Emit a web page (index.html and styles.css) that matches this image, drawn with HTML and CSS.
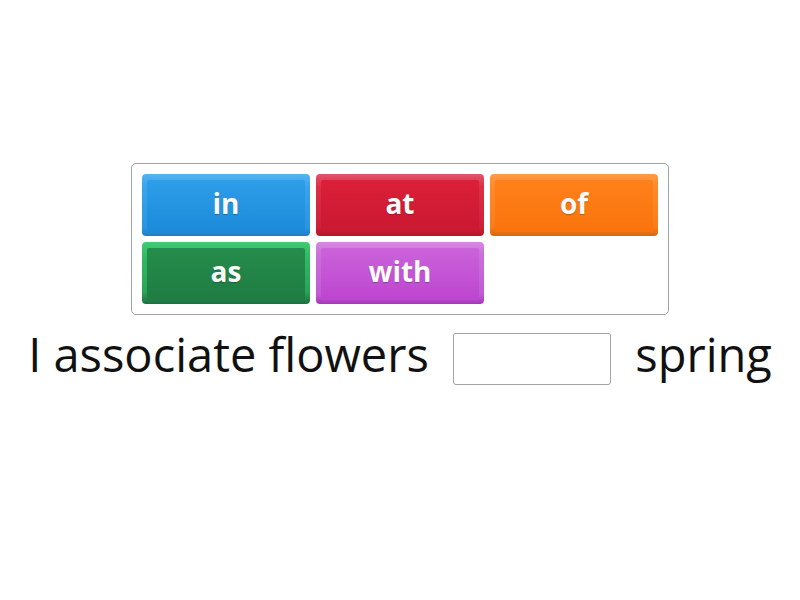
FILE: index.html
```html
<!DOCTYPE html>
<html>
<head>
<meta charset="utf-8">
<link rel="stylesheet" href="styles.css">
</head>
<body>
<div class="stage">
  <div class="bank">
    <div class="tile blue"><span class="face">in</span></div>
    <div class="tile red"><span class="face">at</span></div>
    <div class="tile orange"><span class="face">of</span></div>
    <div class="tile green"><span class="face">as</span></div>
    <div class="tile purple"><span class="face">with</span></div>
  </div>
  <p class="sentence">I associate flowers <span class="blank"></span> spring</p>
</div>
</body>
</html>
```
FILE: styles.css
```css
html, body {
  margin: 0;
  padding: 0;
  background: #ffffff;
}
.stage {
  width: 800px;
  height: 600px;
  padding-top: 163px;
  box-sizing: border-box;
  font-family: "Open Sans", "Noto Sans", sans-serif;
}
.bank {
  width: 538px;
  margin: 0 auto;
  box-sizing: border-box;
  border: 1px solid #a3a3a3;
  border-radius: 5px;
  padding: 10px;
  display: grid;
  grid-template-columns: repeat(3, 168px);
  grid-auto-rows: 62px;
  gap: 6px;
}
.tile {
  border-radius: 4px;
  padding: 6px 5px 4px 5px;
  box-sizing: border-box;
  display: flex;
}
.face {
  flex: 1;
  border-radius: 2px;
  display: flex;
  align-items: center;
  justify-content: center;
  color: #fafafa;
  font-weight: 700;
  font-size: 28px;
  text-shadow: 0 1px 1px rgba(0, 0, 0, 0.25);
  padding-bottom: 6px;
}
.blue {
  background: linear-gradient(#55b4f1, #3aa3ec 20%, #2a96e2 85%, #1d7fc8);
}
.blue .face {
  background: linear-gradient(#2e9ee9, #1b8ad9);
}
.red {
  background: linear-gradient(#e2546a, #dc3047 20%, #cf2139 85%, #b3162b);
}
.red .face {
  background: linear-gradient(#dc1f39, #c91930);
}
.orange {
  background: linear-gradient(#ff9a45, #ff8a2a 20%, #f97d1c 85%, #d9680f);
}
.orange .face {
  background: linear-gradient(#ff801a, #fa740c);
}
.green {
  background: linear-gradient(#3fcc72, #30b862 25%, #2aa458 80%, #1d6f3f);
}
.green .face {
  background: linear-gradient(#258d4c, #1f7c42);
}
.purple {
  background: linear-gradient(#d689e0, #cc6fda 20%, #c15bd3 85%, #a635ba);
}
.purple .face {
  background: linear-gradient(#cb63da, #bd45d0);
}
.sentence {
  margin: 7px 0 0 0;
  text-align: center;
  font-size: 47px;
  line-height: normal;
  color: #111111;
  white-space: nowrap;
}
.blank {
  display: inline-block;
  vertical-align: middle;
  width: 158px;
  height: 52px;
  box-sizing: border-box;
  border: 1px solid #a3a3a3;
  border-radius: 3px;
  background: #ffffff;
  margin: 0 12px;
}
```
